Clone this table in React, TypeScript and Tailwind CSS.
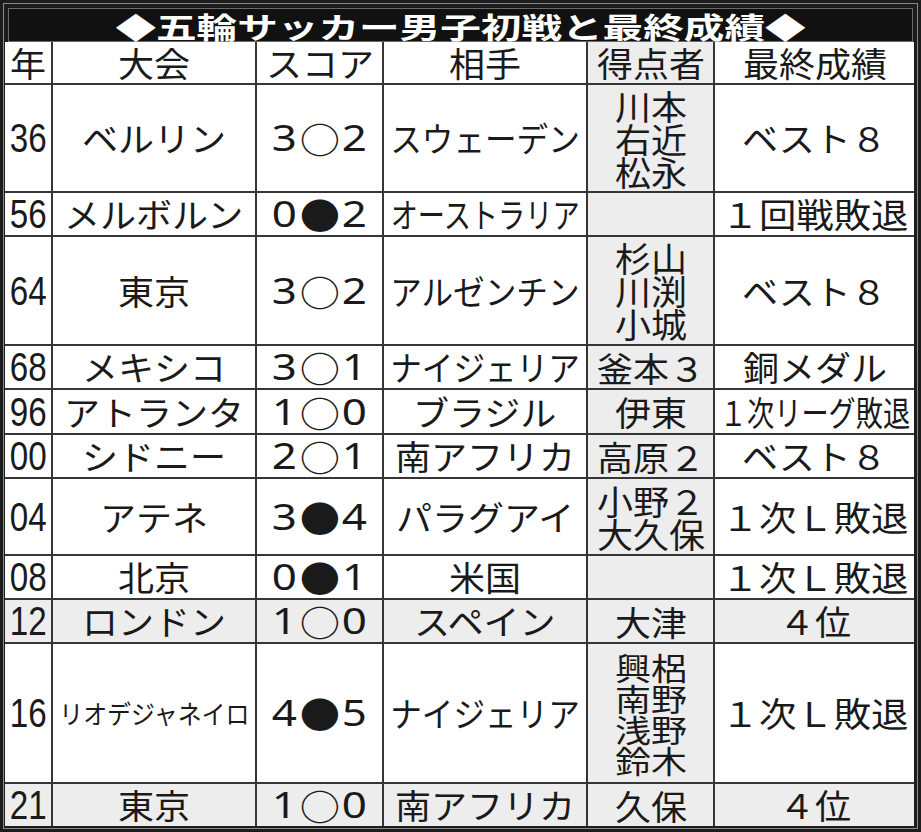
import React from "react";

type Row = {
  y: string;
  city: string;
  cityCls?: string;
  score: [string, string, string];
  opp: string;
  oppCls?: string;
  scorers: string[];
  res: string;
  resCls?: string;
  gray?: boolean;
};

const D = "text-[34px] scale-x-[1.06]";

const rows: Row[] = [
  { y: "36", city: "ベルリン", score: ["3", "○", "2"], opp: "スウェーデン", oppCls: "text-[34px] scale-x-[0.93]", scorers: ["川本", "右近", "松永"], res: "ベスト８" },
  { y: "56", city: "メルボルン", score: ["0", "●", "2"], opp: "オーストラリア", oppCls: "text-[34px] scale-x-[0.8]", scorers: [], res: "１回戦敗退", resCls: "text-[34px] scale-x-[1.1]" },
  { y: "64", city: "東京", score: ["3", "○", "2"], opp: "アルゼンチン", oppCls: "text-[34px] scale-x-[0.93]", scorers: ["杉山", "川渕", "小城"], res: "ベスト８" },
  { y: "68", city: "メキシコ", score: ["3", "○", "1"], opp: "ナイジェリア", oppCls: "text-[34px] scale-x-[0.93]", scorers: ["釜本３"], res: "銅メダル" },
  { y: "96", city: "アトランタ", score: ["1", "○", "0"], opp: "ブラジル", scorers: ["伊東"], res: "１次リーグ敗退", resCls: "text-[34px] scale-x-[0.8]" },
  { y: "00", city: "シドニー", score: ["2", "○", "1"], opp: "南アフリカ", scorers: ["高原２"], res: "ベスト８" },
  { y: "04", city: "アテネ", score: ["3", "●", "4"], opp: "パラグアイ", scorers: ["小野２", "大久保"], res: "１次Ｌ敗退", resCls: "text-[34px] scale-x-[1.1]" },
  { y: "08", city: "北京", score: ["0", "●", "1"], opp: "米国", scorers: [], res: "１次Ｌ敗退", resCls: "text-[34px] scale-x-[1.1]" },
  { y: "12", city: "ロンドン", score: ["1", "○", "0"], opp: "スペイン", scorers: ["大津"], res: "４位", gray: true },
  { y: "16", city: "リオデジャネイロ", cityCls: "text-[26px] scale-x-[0.92]", score: ["4", "●", "5"], opp: "ナイジェリア", oppCls: "text-[34px] scale-x-[0.93]", scorers: ["興梠", "南野", "浅野", "鈴木"], res: "１次Ｌ敗退", resCls: "text-[34px] scale-x-[1.1]" },
  { y: "21", city: "東京", score: ["1", "○", "0"], opp: "南アフリカ", scorers: ["久保"], res: "４位", gray: true },
];

function Txt({ children, cls = D }: { children: React.ReactNode; cls?: string }) {
  return <span className={`inline-block whitespace-nowrap leading-none ${cls}`}>{children}</span>;
}

function Cell({ children, bg }: { children?: React.ReactNode; bg: string }) {
  return <div className={`flex items-center justify-center min-w-0 ${bg}`}>{children}</div>;
}

function Score({ s }: { s: [string, string, string] }) {
  const digit = "w-[35px] flex justify-center";
  return (
    <div className="flex items-center">
      <span className={digit}>
        <span className="inline-block leading-none text-[36px] scale-x-[1.22] font-['Noto_Sans',sans-serif]">{s[0]}</span>
      </span>
      <span className={digit}>
        <span className="inline-block leading-none text-[36px] scale-x-[1.12]">{s[1]}</span>
      </span>
      <span className={digit}>
        <span className="inline-block leading-none text-[36px] scale-x-[1.22] font-['Noto_Sans',sans-serif]">{s[2]}</span>
      </span>
    </div>
  );
}

export default function App() {
  return (
    <div className="w-[921px] h-[832px] bg-[#1c1c1c] p-[3px] font-['Noto_Sans_CJK_JP','Noto_Sans',sans-serif] text-[#1a1a1a]">
      <div className="h-full border border-[#8a8a8a] flex flex-col">
        <div className="mx-[4px] mt-[4px] h-[34px] border border-[#6a6a6a] bg-[#111] flex items-center justify-center pt-[3px]">
          <span className="inline-block whitespace-nowrap leading-none text-[29px] font-bold text-white scale-x-[1.4]">
            ◆五輪サッカー男子初戦と最終成績◆
          </span>
        </div>
        <div className="ml-[1px] mr-[3px] mb-[2px] grid grid-cols-[46px_202px_125px_202px_125px_199px] grid-rows-[41px_106px_42px_107px_42px_43px_42px_75px_42px_42px_138px_42px] gap-[2px] bg-[#363636]">
          <Cell bg="bg-white"><Txt>年</Txt></Cell>
          <Cell bg="bg-white"><Txt>大会</Txt></Cell>
          <Cell bg="bg-white"><Txt>スコア</Txt></Cell>
          <Cell bg="bg-white"><Txt>相手</Txt></Cell>
          <Cell bg="bg-[#ededed]"><Txt>得点者</Txt></Cell>
          <Cell bg="bg-white"><Txt>最終成績</Txt></Cell>
          {rows.map((r) => {
            const bg = r.gray ? "bg-[#ededed]" : "bg-white";
            return (
              <React.Fragment key={r.y}>
                <Cell bg={bg}>
                  <span className="inline-block leading-none text-[40px] scale-x-[0.83] font-['Liberation_Sans',sans-serif] text-[#1a1a1a]">{r.y}</span>
                </Cell>
                <Cell bg={bg}><Txt cls={r.cityCls ?? D}>{r.city}</Txt></Cell>
                <Cell bg={bg}><Score s={r.score} /></Cell>
                <Cell bg={bg}><Txt cls={r.oppCls ?? D}>{r.opp}</Txt></Cell>
                <Cell bg="bg-[#ededed]">
                  {r.scorers.length > 0 && (
                    <div className="flex flex-col items-center">
                      {r.scorers.map((s) => (
                        <span
                          key={s}
                          className={
                            r.scorers.length > 3
                              ? "inline-block whitespace-nowrap text-[31px] scale-x-[1.16] leading-[31px]"
                              : "inline-block whitespace-nowrap text-[34px] scale-x-[1.06] leading-[33px]"
                          }
                        >
                          {s}
                        </span>
                      ))}
                    </div>
                  )}
                </Cell>
                <Cell bg={bg}><Txt cls={r.resCls ?? D}>{r.res}</Txt></Cell>
              </React.Fragment>
            );
          })}
        </div>
      </div>
    </div>
  );
}
